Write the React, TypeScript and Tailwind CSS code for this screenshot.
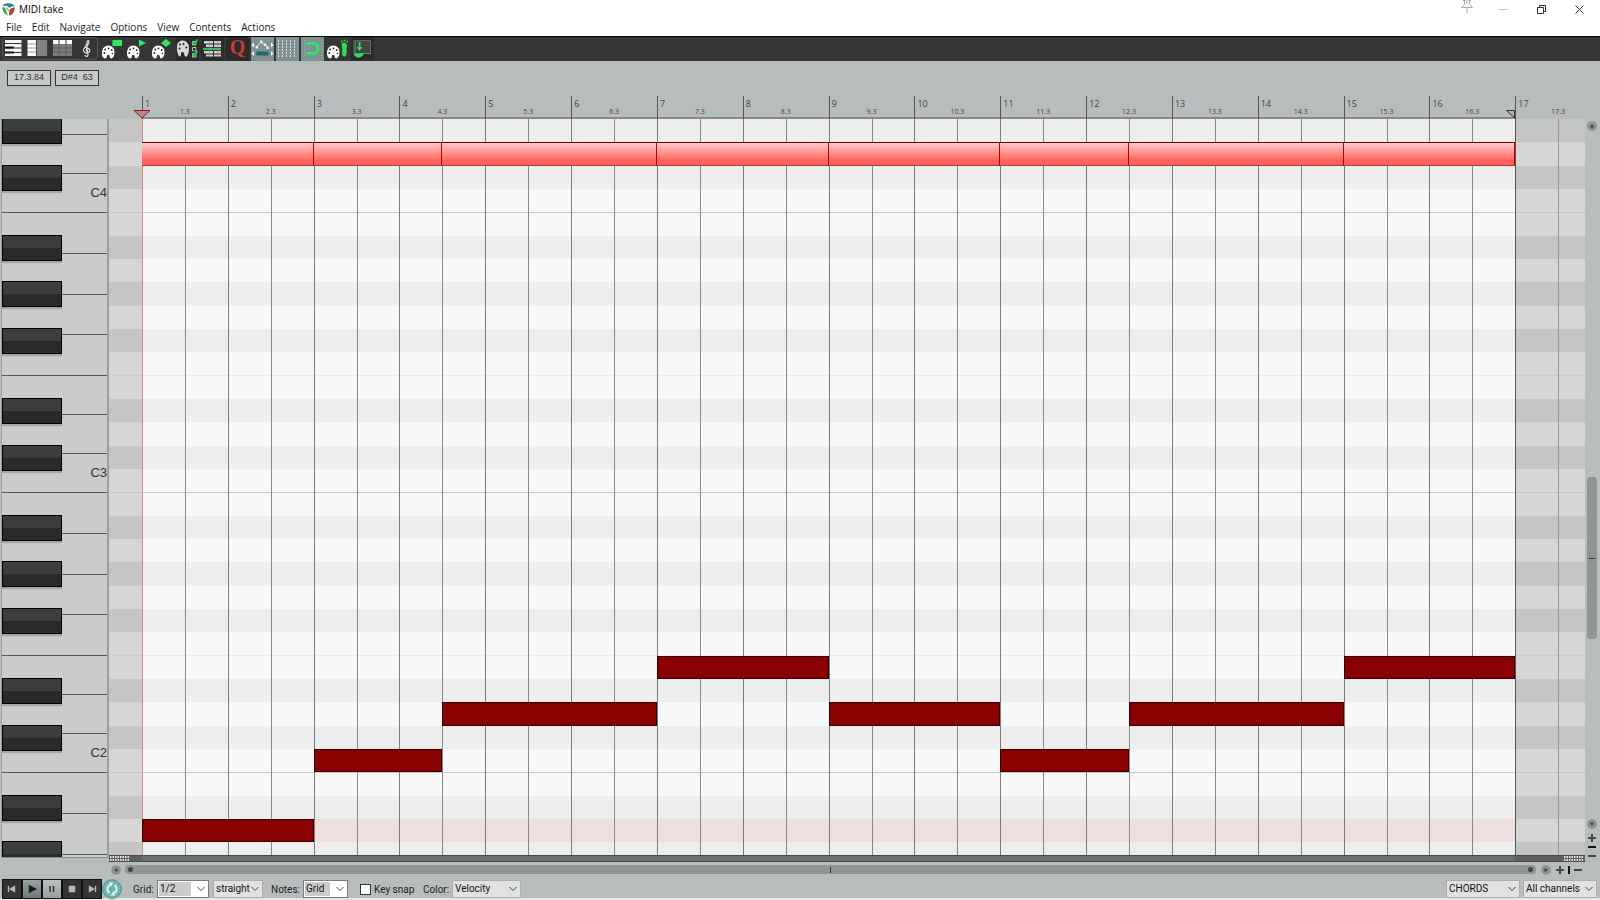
import type { ReactNode } from "react";

// Horizontal scale of the roll: lead-in before bar 1, width of one bar, total.
const LEAD = 33;
const BAR = 85.83;
const SPAN = 1476;

// Vertical scale: about 31.5 semitone rows are visible, D#4 is the topmost.
const ROWS = 31.54;
const TOP_PITCH = 51;

const barX = (bar: number) => `${((LEAD + (bar - 1) * BAR) / SPAN) * 100}%`;
const barW = (bars: number) => `${((bars * BAR) / SPAN) * 100}%`;
const rowY = (row: number) => `${(row / ROWS) * 100}%`;

const isBlack = (pitch: number) => [1, 3, 6, 8, 10].includes(pitch % 12);
const rows = Array.from({ length: 32 }, (_, i) => TOP_PITCH - i);
const bars = Array.from({ length: 17 }, (_, i) => i + 1);

type Note = { start: number; end: number; pitch: number };

const chordNotes: Note[] = [
  { start: 1, end: 3, pitch: 50 },
  { start: 3, end: 4.5, pitch: 50 },
  { start: 4.5, end: 7, pitch: 50 },
  { start: 7, end: 9, pitch: 50 },
  { start: 9, end: 11, pitch: 50 },
  { start: 11, end: 12.5, pitch: 50 },
  { start: 12.5, end: 15, pitch: 50 },
  { start: 15, end: 17, pitch: 50 },
];

const bassNotes: Note[] = [
  { start: 1, end: 3, pitch: 21 },
  { start: 3, end: 4.5, pitch: 24 },
  { start: 4.5, end: 7, pitch: 26 },
  { start: 7, end: 9, pitch: 28 },
  { start: 9, end: 11, pitch: 26 },
  { start: 11, end: 12.5, pitch: 24 },
  { start: 12.5, end: 15, pitch: 26 },
  { start: 15, end: 17, pitch: 28 },
];

const menus = ["File", "Edit", "Navigate", "Options", "View", "Contents", "Actions"];

function TitleBar() {
  return (
    <div className="mb-[2px] flex h-[18px] items-center pl-[2px]">
      <svg className="mr-1 size-[13px]" viewBox="0 0 13 13">
        <path d="M0.300 3.500Q1.500 0.300 6.500 0.200Q11.500 0.300 12.700 3.500Q9 2.500 7.500 5Q5 1.500 0.300 3.500Z" fill="#2f7fa3" />
        <path d="M0.200 4.500Q2.500 3.800 3.500 5.500Q4.500 8 6 12.700Q0.800 10.500 0.200 4.500Z" fill="#52a63f" />
        <path d="M12.800 4.500Q12.800 10.500 7.300 12.800Q6.500 10 7.500 7Q9 4 12.800 4.500Z" fill="#a8493f" />
        <path d="M4 4.500Q6 5 6.500 8" fill="none" stroke="#3f8f8f" strokeWidth="1" />
      </svg>
      <span className="text-[10px] text-black">MIDI take</span>
      <div className="ml-auto flex h-full items-center pr-4">
        <button aria-label="Pin" className="mr-[25px] self-start">
          <svg className="h-[14px] w-[14px]" viewBox="0 0 14 14" fill="none" stroke="#aaa">
            <path d="M3 .5h2.500M8.500 .5h2.500M4.500 0v4.500L1.500 7.500h11L9.500 4.500V0M7 8v5M7 0v4" />
          </svg>
        </button>
        <button aria-label="Minimize" className="mr-[29px]">
          <svg className="h-[9px] w-[9px]" viewBox="0 0 9 9" stroke="#c4c4c4">
            <path d="M0 4.5h9" />
          </svg>
        </button>
        <button aria-label="Restore" className="mr-[29px]">
          <svg className="h-[9px] w-[9px]" viewBox="0 0 9 9" fill="none" stroke="#333">
            <path d="M.5 2.5h6v6h-6zM2.5 2.5v-2h6v6h-2" />
          </svg>
        </button>
        <button aria-label="Close">
          <svg className="h-[9px] w-[9px]" viewBox="0 0 9 9" stroke="#333">
            <path d="M.5 .5l8 8M8.500 .5l-8 8" />
          </svg>
        </button>
      </div>
    </div>
  );
}

function Palette() {
  return (
    <>
      <path
        d="M2 18.500Q1.500 10 8 9.500Q14.500 10 14.500 16Q14.500 21 11.500 22.500Q9.500 22 9.500 19.500Q8 18 7 19.500Q7.200 22 5 22.500Q2.500 22 2 18.500Z"
        fill="#fff"
      />
      <circle cx="5.200" cy="13.500" r="0.900" fill="#222" />
      <circle cx="8.500" cy="12.400" r="0.900" fill="#222" />
      <circle cx="11.700" cy="14" r="0.900" fill="#222" />
      <circle cx="4.300" cy="17" r="0.900" fill="#222" />
      <circle cx="12.400" cy="17.500" r="0.800" fill="#222" />
    </>
  );
}

const tools: { name: string; look?: "active" | "dim"; icon: ReactNode }[] = [
  {
    name: "Piano roll view",
    icon: (
      <>
        <path d="M5 4h16.500v3h-16.500zM5 8h16.500v3.500h-16.500zM5 12.500h16.500v3.500h-16.500zM5 17h16.500v3h-16.500z" fill="#f4f4f4" />
        <path d="M5 11.500h9M5 16.500h9" stroke="#111" strokeWidth="2" />
      </>
    ),
  },
  {
    name: "Named notes view",
    icon: (
      <>
        <path d="M2.500 4h8.500v16h-8.500z" fill="#fff" />
        <path d="M12 4h10v16h-10z" fill="#858585" />
        <path d="M2.500 8h20M2.500 12h20M2.500 16h20" stroke="#777" strokeWidth="0.800" />
      </>
    ),
  },
  {
    name: "Event list view",
    icon: (
      <>
        <path d="M3 8h19v12h-19z" fill="#7c7c7c" />
        <path d="M3 4h5.500v4h-5.500zM9.500 4h6v4h-6zM16.500 4h5.500v4h-5.500z" fill="#fff" />
        <path d="M3 12h19M3 16h19M9 8v12M16 8v12" stroke="#555" strokeWidth="0.800" />
      </>
    ),
  },
  {
    name: "Notation view",
    icon: (
      <path
        d="M12 17.500V7Q12 4.500 13.500 4.500Q15 7 11.500 10Q8 12.500 8.500 15Q9.500 17.500 12.500 17Q15.500 16 14.500 13.500Q13 11.800 11.500 13Q10.500 14.500 12 15.500M11 8L13 18.500Q13 20.500 11 20.300Q10 20 10 19"
        fill="none"
        stroke="#ddd"
        strokeWidth="1.200"
      />
    ),
  },
  {
    name: "Color notes by velocity",
    icon: (
      <>
        <Palette />
        <path d="M12.500 4h9.500v6h-9.500z" fill="#34e859" />
      </>
    ),
  },
  {
    name: "Color notes by channel",
    icon: (
      <>
        <Palette />
        <path d="M14 3.500l7 3.500l-7 3.500z" fill="#34e859" />
      </>
    ),
  },
  {
    name: "Color notes by pitch",
    icon: (
      <>
        <Palette />
        <path d="M16 3l5 4l-5 4l-5 -4z" fill="#34e859" />
      </>
    ),
  },
  {
    name: "Color options",
    look: "dim",
    icon: (
      <>
        <path d="M2 10Q2.500 4.500 8 4.500Q14 5.500 14 12Q14 18 11.500 21Q9 20.500 9 17Q7.500 15 6 17Q6.500 20.500 4 20.500Q1.500 16 2 10Z" fill="#d8d8d8" />
        <circle cx="5" cy="8.500" r="1" fill="#222" />
        <circle cx="8.500" cy="8" r="1" fill="#222" />
        <circle cx="11.300" cy="11.500" r="1" fill="#222" />
        <circle cx="4.500" cy="12.500" r="1" fill="#222" />
        <path d="M17.500 5.500h3.500v3.500h-3.500zM17.500 11.500h3.500v3.500h-3.500zM17.500 17.500h3.500v3.500h-3.500z" fill="none" stroke="#ccc" strokeWidth="0.900" />
        <path d="M17.500 6l1.500 2.500l3.500 -5M17.500 17.500l1.500 2.500l3.500 -5" fill="none" stroke="#20d845" strokeWidth="1.600" />
      </>
    ),
  },
  {
    name: "Filter events",
    look: "dim",
    icon: (
      <>
        <path d="M4 5h9v2.500h-9zM14 5h7v2.500h-7zM6 8.500h7v2.500h-7zM14 8.500h7v2.500h-7zM4 15h9v2.500h-9zM14 15h7v2.500h-7zM6 18.500h7v2h-7zM14 18.500h7v2h-7z" fill="#cfcfcf" />
        <path d="M3 13h18" stroke="#43b95b" strokeWidth="2.400" />
        <path d="M9.500 5v15M17.500 5v15" stroke="#888" strokeWidth="0.600" />
      </>
    ),
  },
  {
    name: "Quantize",
    look: "dim",
    icon: (
      <text x="12.500" y="18" textAnchor="middle" fontFamily="Liberation Serif, serif" fontWeight="700" fontSize="20" fill="#c93c3c">
        Q
      </text>
    ),
  },
  {
    name: "CC lanes",
    look: "active",
    icon: (
      <>
        <path d="M6.500 11l4.500 -5l4 3l3 3" fill="none" stroke="#e8eeee" />
        <path d="M5.500 10h2.500v2.500h-2.500zM10 4.500h2.500v2.500h-2.500zM14 7.500h2.500v2.500h-2.500zM16.500 10.500h2.500v2.500h-2.500z" fill="#e8eeee" />
        <path d="M4 6.500v5l-2.500 -2.500zM21 6.500v5l2.500 -2.500zM4 15v5l-2.500 -2.500zM21 15v5l2.500 -2.500z" fill="#fff" />
        <path d="M6.500 15.500h12v4h-12z" fill="#25686c" />
      </>
    ),
  },
  {
    name: "Toggle grid",
    look: "active",
    icon: (
      <path d="M3.500 4v17M7.500 4v17M11.500 4v17M15.500 4v17M19.500 4v17" stroke="#dbe3e3" strokeWidth="1" strokeDasharray="2 1" />
    ),
  },
  {
    name: "Toggle snap",
    look: "active",
    icon: (
      <>
        <path d="M4.500 4v17M21.500 4v17" stroke="#a9b6b6" strokeDasharray="1 2" />
        <path d="M6 7.500H13.500A4.500 5 0 0 1 13.500 17.500H6" fill="none" stroke="#2de36c" strokeWidth="3" />
      </>
    ),
  },
  {
    name: "Step color",
    icon: (
      <>
        <Palette />
        <path d="M16.500 9Q16.500 6.500 19.500 6.500Q23 7.500 21.500 12.500Q22 18 20.500 20.500Q17 21 17 17.500Q18 12.500 16.500 9Z" fill="#2be04f" />
        <path d="M16 5.500h1.500M18.500 4.500h2M21.500 5.500h1.500" stroke="#2be04f" strokeWidth="1.500" />
      </>
    ),
  },
  {
    name: "Dock editor",
    look: "dim",
    icon: (
      <>
        <path d="M5.500 4.500h15v13h-15z" fill="#444" stroke="#666" />
        <path d="M4 4v14M9 17.500h12" stroke="#4b9b62" />
        <path d="M4 17.500h10Q12 21.500 9 21.500Q4 21.500 4 17.500Z" fill="#35d866" />
        <path d="M9.500 6v6" stroke="#35d866" strokeWidth="1.800" />
        <path d="M6.500 11h6l-3 4z" fill="#35d866" />
      </>
    ),
  },
];

function Toolbar() {
  return (
    <div className="relative flex h-[25px] border-t border-black bg-[#363636]">
      {tools.map((tool) => (
        <button
          key={tool.name}
          aria-label={tool.name}
          className={`h-6 w-[25px] border-x border-[#363636] ${
            tool.look === "active" ? "bg-[#7f9194]" : tool.look === "dim" ? "bg-[#2b2b2b]" : "bg-[#363636]"
          }`}
        >
          <svg className="h-6 w-[23px]" viewBox="1 1 23 24">
            {tool.icon}
          </svg>
        </button>
      ))}
      <div className="pointer-events-none absolute left-[2px] top-0 h-[23px] w-24 rounded border border-[#555]" />
    </div>
  );
}

function Ruler() {
  return (
    <div className="relative h-[23px] flex-1 text-[#444]">
      <div className="absolute bottom-0 h-[2px] bg-[#858b8b]" style={{ left: barX(1), width: barW(16) }} />
      {bars.map((bar) => (
        <div key={bar}>
          <div className="absolute inset-y-0 w-px bg-[#555]" style={{ left: barX(bar) }} />
          <span className="absolute top-[2px] pl-[3px] text-[9px] leading-3" style={{ left: barX(bar) }}>
            {bar}
          </span>
          <span
            className="absolute top-[11px] -translate-x-1/2 text-[7px] leading-[10px]"
            style={{ left: barX(bar + 0.5) }}
          >
            {bar}.3
          </span>
        </div>
      ))}
      <svg className="absolute bottom-0 h-[10px] w-[18px] -translate-x-1/2" style={{ left: barX(1) }} viewBox="0 0 18 10">
        <path d="M1 1.500h16l-8 7.500z" fill="#b98a8a" stroke="#a31515" />
      </svg>
      <svg className="absolute bottom-0 h-[10px] w-[10px] -translate-x-full" style={{ left: barX(17) }} viewBox="0 0 10 10">
        <path d="M1.500 1.500h8v7.500z" fill="#aab0b0" stroke="#333" />
      </svg>
    </div>
  );
}

// White keys are evenly spread over the half-octaves C-E (5 rows) and F-B (7 rows).
function Piano() {
  const keys: { label?: string; size: number }[] = [{ size: 0.65 }, { size: 5 / 3 }, { label: "C4", size: 5 / 3 }];
  for (const label of ["C3", "C2"]) {
    for (let i = 0; i < 4; i++) keys.push({ size: 7 / 4 });
    keys.push({ size: 5 / 3 }, { size: 5 / 3 }, { label, size: 5 / 3 });
  }
  keys.push({ size: 7 / 4 }, { size: 7 / 4 }, { size: 7 / 4 });

  return (
    <div className="relative ml-px w-[108px] overflow-hidden border-l border-r-2 border-[#9a9f9f] bg-[#cbcbcb]">
      <div className="absolute inset-x-0 top-0 bottom-[3px]">
        {keys.map((key, i) => {
          const top = keys.slice(0, i).reduce((sum, k) => sum + k.size, 0);
          return (
            <div
              key={i}
              className={`absolute inset-x-0 flex items-center justify-end text-[13px] text-[#333] ${
                i > 0 ? "border-t border-[#555]" : ""
              }`}
              style={{ top: rowY(top), height: rowY(key.size) }}
            >
              {key.label}
            </div>
          );
        })}
        {rows.map(
          (pitch, i) =>
            isBlack(pitch) && (
              <div
                key={pitch}
                className="absolute left-0 -mt-px h-[26px] w-[60px] border border-black bg-linear-to-b from-[#3d3d3d] from-50% to-[#2a2a2a] to-50% shadow-[0_2px_1px_#a5a5a5]"
                style={{ top: rowY(i) }}
              />
            ),
        )}
      </div>
      <div className="absolute inset-x-0 bottom-0 h-px bg-[#858b8b]" />
    </div>
  );
}

function NoteBlock({ note, className }: { note: Note; className: string }) {
  return (
    <div
      className={`absolute ${className}`}
      style={{
        left: barX(note.start),
        width: barW(note.end - note.start),
        top: rowY(TOP_PITCH - note.pitch),
        height: rowY(1),
      }}
    />
  );
}

function Roll() {
  return (
    <div className="relative flex-1 overflow-hidden">
      {rows.map((pitch, i) => (
        <div
          key={pitch}
          className={`absolute inset-x-0 ${isBlack(pitch) ? "bg-[#c5c5c5]" : "bg-[#d6d6d6]"}`}
          style={{ top: rowY(i), height: rowY(1) }}
        >
          <div
            className={`absolute inset-y-0 ${
              pitch === 21 ? "bg-[#eedede]" : isBlack(pitch) ? "bg-[#eeeeee]" : "bg-[#f8f8f8]"
            }`}
            style={{ left: barX(1), width: barW(16) }}
          />
          {pitch % 12 === 11 && <div className="absolute inset-x-0 top-0 h-px bg-[#c6c6c6]" />}
          {pitch % 12 === 5 && <div className="absolute inset-x-0 bottom-0 h-px bg-black/5" />}
        </div>
      ))}
      {bars.map((bar) => (
        <div key={bar}>
          <div
            className={`absolute inset-y-0 w-px ${bar === 17 ? "bg-[#555]" : "bg-[#7c7c7c]"}`}
            style={{ left: barX(bar) }}
          />
          <div
            className={`absolute inset-y-0 w-px ${bar === 17 ? "bg-[#999]" : "bg-[#8a8a8a]"}`}
            style={{ left: barX(bar + 0.5) }}
          />
        </div>
      ))}
      <div className="absolute inset-y-0 w-px bg-[#c98f8f]" style={{ left: barX(1) }} />
      {chordNotes.map((note) => (
        <NoteBlock
          key={note.start}
          note={note}
          className="border-t border-r border-b border-t-[#7a0000] border-r-[#b80000] border-b-[#a83a3a] bg-linear-to-b from-[#ffcaca] to-[#ff5f5f] to-80%"
        />
      ))}
      {bassNotes.map((note) => (
        <NoteBlock key={note.start} note={note} className="border border-[#300000] bg-[#8b0000]" />
      ))}
    </div>
  );
}

function Grip() {
  return (
    <svg className="relative h-[5px] w-5" viewBox="0 0 20 5">
      <path d="M0 1h20M0 4h20" stroke="#e4e6e6" strokeWidth="2" strokeDasharray="1.500 1" />
    </svg>
  );
}

function CcDivider() {
  return (
    <div className="relative flex h-[7px] items-center justify-between border-y border-[#474b4b] bg-[#5b5f5f] px-px">
      <div className="absolute inset-y-0 bg-[#6a6f6f]" style={{ left: barX(1), width: barW(16) }} />
      <Grip />
      <Grip />
    </div>
  );
}

function RoundButton({ label, d }: { label: string; d: string }) {
  return (
    <button aria-label={label} className="size-[10px]">
      <svg className="size-[10px]" viewBox="0 0 10 10">
        <circle cx="5" cy="5" r="4.800" fill="#8c9191" />
        <path d={d} fill="#3c4040" />
      </svg>
    </button>
  );
}

function GlyphButton({ label, d, color = "#444" }: { label: string; d: string; color?: string }) {
  return (
    <button aria-label={label} className="size-2">
      <svg className="size-2" viewBox="0 0 8 8" stroke={color} strokeWidth="2">
        <path d={d} />
      </svg>
    </button>
  );
}

function VerticalScroll() {
  return (
    <div className="flex w-[15px] flex-col items-center pt-[2px] pr-px pb-1">
      <RoundButton label="Scroll up" d="M5 3l2 3.500h-4z" />
      <div className="flex w-[10px] flex-1 flex-col">
        <div className="flex-[346]" />
        <div className="flex flex-[162] items-center justify-center rounded-[4px] bg-[#8f9494]">
          <div className="h-px w-[6px] bg-[#333]" />
        </div>
        <div className="flex-[180]" />
      </div>
      <RoundButton label="Scroll down" d="M5 7l2 -3.500h-4z" />
      <div className="mt-[5px] flex flex-col">
        <GlyphButton label="Zoom in vertically" d="M0 4h8M4 0v8" />
        <GlyphButton label="Reset vertical zoom" d="M0 5h8" color="#111" />
        <GlyphButton label="Zoom out vertically" d="M0 6h8" />
      </div>
    </div>
  );
}

function HorizontalScroll() {
  return (
    <div className="flex h-[15px] items-center pr-[18px] pl-[111px]">
      <RoundButton label="Scroll left" d="M3 5l3.500 -2v4z" />
      <div className="mr-[5px] ml-1 flex h-[9px] flex-1 items-center justify-between rounded bg-[#8f9494] px-[3px]">
        <div className="size-[5px] rounded-full bg-[#444]" />
        <div className="h-[6px] w-px bg-[#333]" />
        <div className="size-[5px] rounded-full bg-[#444]" />
      </div>
      <RoundButton label="Scroll right" d="M7 5l-3.500 -2v4z" />
      <div className="ml-[5px] flex gap-px">
        <GlyphButton label="Zoom in" d="M0 4h8M4 0v8" />
        <GlyphButton label="Reset zoom" d="M4 0v8" color="#111" />
        <GlyphButton label="Zoom out" d="M0 4h8" />
      </div>
    </div>
  );
}

const transport = [
  { name: "Go to start", d: "M6.500 7v6M12.500 7.500v5l-4 -2.500z", look: "bg-[#333]", ink: "#b4baba" },
  { name: "Play", d: "M7.500 7l6 3l-6 3z", look: "bg-linear-to-b from-[#99a3a3] to-[#6f7979]", ink: "#1a1a1a" },
  { name: "Pause", d: "M8 7v6M11.500 7v6", look: "bg-linear-to-b from-[#b9c1c1] to-[#98a0a0]", ink: "#2a2a2a" },
  { name: "Stop", d: "M7.500 7.500h5v5h-5z", look: "bg-[#333]", ink: "#b4baba" },
  { name: "Go to end", d: "M13.500 7v6M7.500 7.500v5l4 -2.500z", look: "bg-[#333]", ink: "#b4baba" },
];

function Transport() {
  return (
    <div className="flex items-center">
      <div className="flex">
        {transport.map((item) => (
          <button key={item.name} aria-label={item.name} className={`h-5 w-5 border border-[#111] ${item.look}`}>
            <svg className="size-[18px]" viewBox="1 1 18 18" fill={item.ink} stroke={item.ink} strokeWidth="1.400">
              <path d={item.d} />
            </svg>
          </button>
        ))}
      </div>
      <button aria-label="Repeat" className="size-5">
        <svg className="size-5" viewBox="0 0 20 20">
          <circle cx="10" cy="10" r="9.300" fill="#6db3b5" stroke="#4e9092" />
          <path d="M7.500 14A4.800 4.800 0 0 1 7.500 6M12.500 6A4.800 4.800 0 0 1 12.500 14" fill="none" stroke="#e9f4f4" strokeWidth="2" />
          <path d="M7 3.500h4.500l-3 4.500zM13 16.500h-4.500l3 -4.500z" fill="#e9f4f4" />
        </svg>
      </button>
    </div>
  );
}

function Chevron() {
  return (
    <svg className="pointer-events-none absolute top-[5px] right-[3px] h-[6px] w-2" viewBox="0 0 8 6" fill="none" stroke="#444">
      <path d="M.5 1l3.500 3.500l3.500 -3.500" />
    </svg>
  );
}

type DropDownProps = { label: string; value: string; className: string; editable?: boolean };

function DropDown({ label, value, className, editable }: DropDownProps) {
  return (
    <div
      className={`relative h-[18px] border ${
        editable ? "border-[#7a7a7a] bg-white p-px" : "border-[#adadad] bg-[#e1e1e1]"
      } ${className}`}
    >
      <select
        aria-label={label}
        className={`block appearance-none text-[10px] leading-[14px] text-[#111] outline-none ${
          editable ? "h-[14px] w-[calc(100%-16px)] bg-[#cbcbcb] pl-px" : "h-4 w-full bg-transparent pl-[2px]"
        }`}
      >
        <option>{value}</option>
      </select>
      <Chevron />
    </div>
  );
}

function StatusBar() {
  return (
    <div className="flex h-[23px] items-start border-b-2 border-[#e4e6e6] pt-[2px] pr-[3px] pl-[2px] font-[Roboto,sans-serif] text-[10px] text-[#222]">
      <div className="flex w-full items-center">
        <Transport />
        <span className="ml-[11px] w-6">Grid:</span>
        <DropDown label="Grid" value="1/2" editable className="w-[52px]" />
        <DropDown label="Grid type" value="straight" className="ml-1 w-[50px]" />
        <span className="ml-2 w-8">Notes:</span>
        <DropDown label="Notes" value="Grid" editable className="w-[45px]" />
        <label className="ml-3 flex w-[51px] items-center gap-[3px] whitespace-nowrap">
          <input type="checkbox" className="size-[11px] shrink-0 appearance-none border border-[#333] bg-white" />
          Key snap
        </label>
        <span className="ml-3 w-[29px]">Color:</span>
        <DropDown label="Color" value="Velocity" className="w-[69px]" />
        <DropDown label="Track" value="CHORDS" className="ml-auto w-[74px]" />
        <DropDown label="Channel" value="All channels" className="ml-[3px] w-[74px]" />
      </div>
    </div>
  );
}

export default function App() {
  return (
    <div className="flex h-screen flex-col overflow-hidden bg-[#b7bdbd] font-['Open_Sans',sans-serif]">
      <div className="h-9 bg-white">
        <TitleBar />
        <nav className="flex gap-[10px] pl-[6px] text-[10px] leading-[14px] text-[#222]">
          {menus.map((menu) => (
            <button key={menu}>{menu}</button>
          ))}
        </nav>
      </div>
      <Toolbar />
      <div className="flex h-[35px] items-start gap-1 pt-[9px] pl-[7px] font-['Liberation_Sans',sans-serif] text-[9px] text-[#333]">
        <div className="flex h-4 w-11 items-center justify-center border border-[#333] bg-[#c8c8c8]">17.3.84</div>
        <div className="flex h-4 w-11 items-center justify-center border border-[#333] bg-[#c8c8c8] whitespace-pre">
          {"D#4  63"}
        </div>
      </div>
      <div className="flex pr-[15px] pl-[109px]">
        <Ruler />
      </div>
      <div className="flex min-h-0 flex-1">
        <div className="flex pb-1 font-['Liberation_Sans',sans-serif]">
          <Piano />
        </div>
        <div className="flex flex-1 flex-col">
          <Roll />
          <CcDivider />
        </div>
        <VerticalScroll />
      </div>
      <HorizontalScroll />
      <StatusBar />
    </div>
  );
}
